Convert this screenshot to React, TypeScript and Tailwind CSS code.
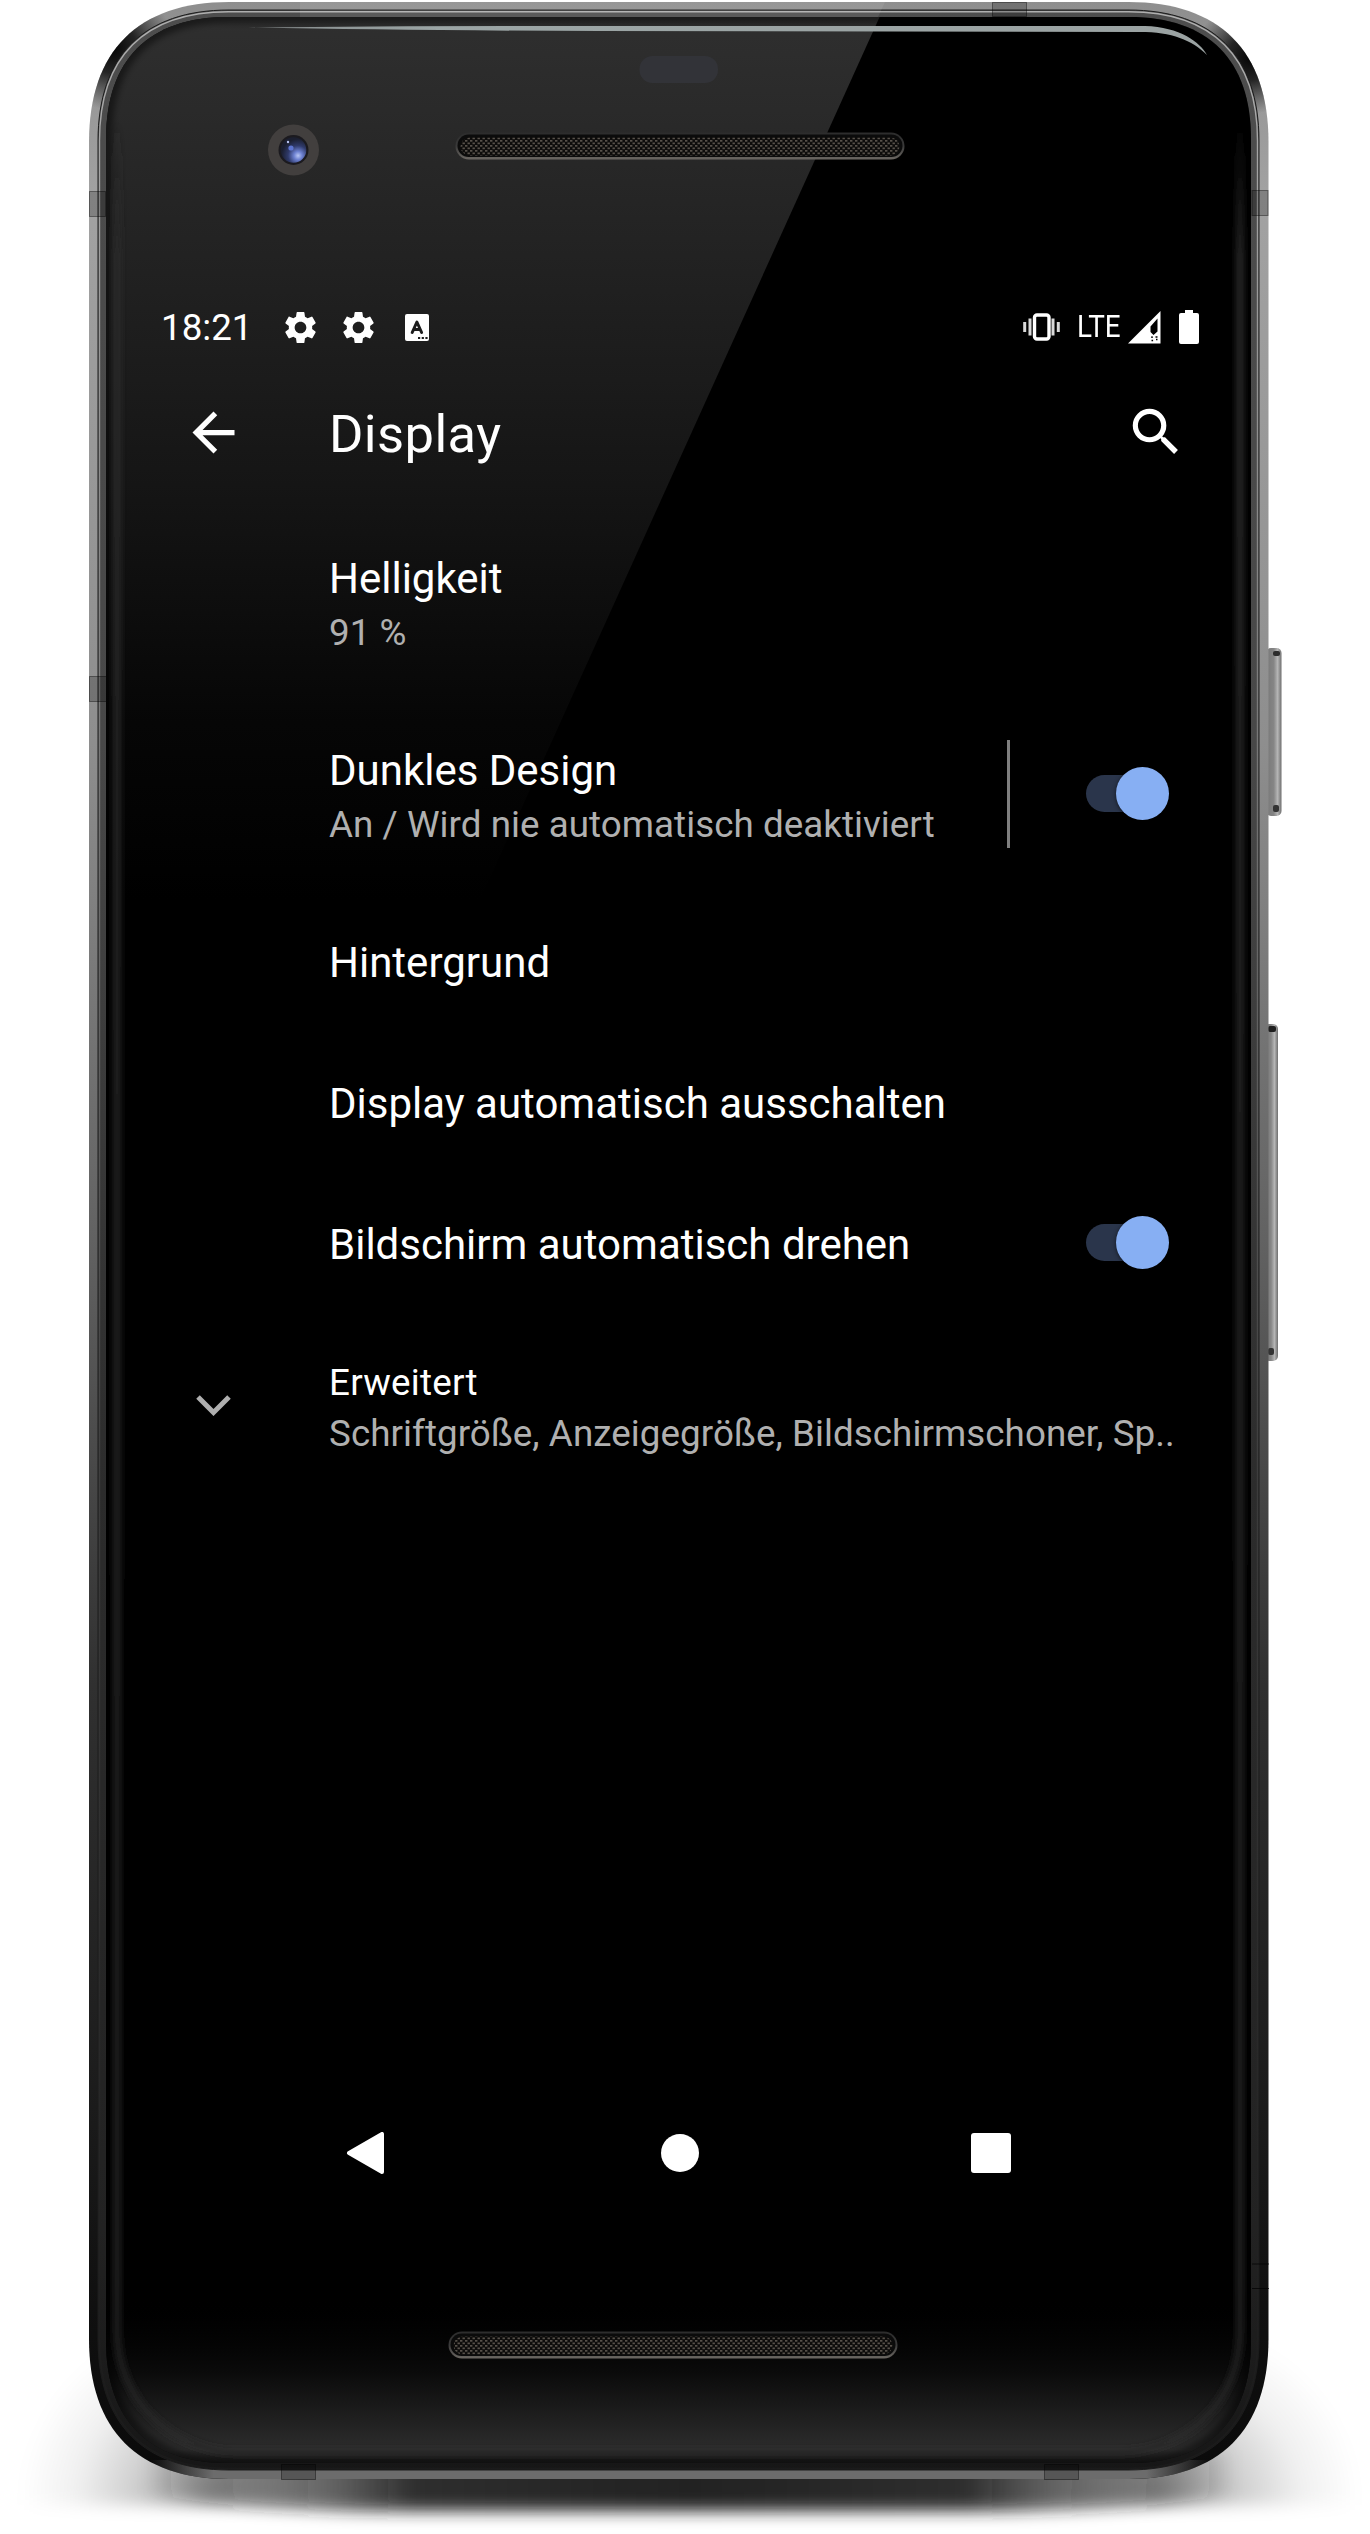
import React from "react";
import { MdArrowBack, MdSearch, MdSettings } from "react-icons/md";

function rounded(l: number, t: number, r: number, b: number, R: number) {
  const k = R * 0.35;
  return `M${l} ${t + R}C${l} ${t + k} ${l + k} ${t} ${l + R} ${t}H${r - R}C${r - k} ${t} ${r} ${t + k} ${r} ${t + R}V${b - R}C${r} ${b - k} ${r - k} ${b} ${r - R} ${b}H${l + R}C${l + k} ${b} ${l} ${b - k} ${l} ${b - R}Z`;
}

function Speaker({ x, y }: { x: number; y: number }) {
  return (
    <g>
      <rect x={x} y={y} width="449" height="27" rx="13.5" fill="url(#lip)" />
      <rect x={x + 2} y={y + 2} width="445" height="22.5" rx="11.2" fill="#0b0b0b" />
      <rect x={x + 5} y={y + 5} width="439" height="18" rx="9" fill="url(#mesh)" />
    </g>
  );
}

function Device() {
  const outer = rounded(89, 2, 1268.5, 2479, 140);
  const rim = rounded(98, 10, 1259, 2470, 131);
  const glass = rounded(106, 17, 1251, 2463, 122);
  return (
    <svg className="absolute inset-0" width="1370" height="2534" viewBox="0 0 1370 2534" aria-hidden="true">
      <defs>
        <linearGradient id="frame" x1="0" x2="0" y1="0" y2="2479" gradientUnits="userSpaceOnUse">
          <stop offset="0" stopColor="#8e8e8e" />
          <stop offset=".08" stopColor="#a2a2a2" />
          <stop offset=".3" stopColor="#8e8e8e" />
          <stop offset=".5" stopColor="#626262" />
          <stop offset=".68" stopColor="#303030" />
          <stop offset=".85" stopColor="#1b1b1b" />
          <stop offset=".93" stopColor="#101010" />
          <stop offset="1" stopColor="#0a0a0a" />
        </linearGradient>
        <linearGradient id="rim" x1="0" x2="0" y1="0" y2="2479" gradientUnits="userSpaceOnUse">
          <stop offset="0" stopColor="#4d4d4d" />
          <stop offset=".3" stopColor="#484848" />
          <stop offset=".6" stopColor="#2c2c2c" />
          <stop offset=".9" stopColor="#222" />
          <stop offset="1" stopColor="#161616" />
        </linearGradient>
        <linearGradient id="rimLine" x1="0" x2="0" y1="0" y2="2479" gradientUnits="userSpaceOnUse">
          <stop offset="0" stopColor="#b0b0b0" />
          <stop offset=".3" stopColor="#777" />
          <stop offset=".6" stopColor="#3c3c3c" />
          <stop offset="1" stopColor="#1a1a1a" />
        </linearGradient>
        <radialGradient id="cornerDark">
          <stop offset="0" stopColor="#050505" />
          <stop offset=".4" stopColor="#111" stopOpacity=".85" />
          <stop offset="1" stopColor="#222" stopOpacity="0" />
        </radialGradient>
        <linearGradient id="chin" x1="150" x2="1210" y1="0" y2="0" gradientUnits="userSpaceOnUse">
          <stop offset="0" stopColor="#6c6c6c" stopOpacity="0" />
          <stop offset=".06" stopColor="#6c6c6c" />
          <stop offset=".94" stopColor="#6c6c6c" />
          <stop offset="1" stopColor="#6c6c6c" stopOpacity="0" />
        </linearGradient>
        <linearGradient id="reflect" x1="0" x2="0" y1="17" y2="900" gradientUnits="userSpaceOnUse">
          <stop offset="0" stopColor="#2f2f2f" />
          <stop offset=".25" stopColor="#232323" />
          <stop offset=".53" stopColor="#151515" />
          <stop offset=".8" stopColor="#060606" />
          <stop offset="1" stopColor="#000" />
        </linearGradient>
        <linearGradient id="base" x1="0" x2="0" y1="2300" y2="2463" gradientUnits="userSpaceOnUse">
          <stop offset="0" stopColor="#000" stopOpacity="0" />
          <stop offset=".45" stopColor="#0b0b0b" />
          <stop offset=".92" stopColor="#2d2d2d" />
          <stop offset="1" stopColor="#1c1c1c" />
        </linearGradient>
        <linearGradient id="edgeGlow" x1="0" x2="0" y1="120" y2="2450" gradientUnits="userSpaceOnUse">
          <stop offset="0" stopColor="#2a2a2a" stopOpacity="0" />
          <stop offset=".06" stopColor="#2a2a2a" />
          <stop offset=".92" stopColor="#222" />
          <stop offset="1" stopColor="#2a2a2a" stopOpacity=".6" />
        </linearGradient>
        <linearGradient id="floor" x1="140" x2="1240" y1="0" y2="0" gradientUnits="userSpaceOnUse">
          <stop offset="0" stopColor="#222" stopOpacity="0" />
          <stop offset=".08" stopColor="#222" stopOpacity=".35" />
          <stop offset=".25" stopColor="#222" stopOpacity=".95" />
          <stop offset=".5" stopColor="#222" />
          <stop offset=".75" stopColor="#222" stopOpacity=".95" />
          <stop offset=".92" stopColor="#222" stopOpacity=".35" />
          <stop offset="1" stopColor="#222" stopOpacity="0" />
        </linearGradient>
        <radialGradient id="hazeSide">
          <stop offset="0" stopColor="#000" stopOpacity=".4" />
          <stop offset=".4" stopColor="#000" stopOpacity=".19" />
          <stop offset=".7" stopColor="#000" stopOpacity=".06" />
          <stop offset="1" stopColor="#000" stopOpacity="0" />
        </radialGradient>
        <linearGradient id="lip" x1="0" x2="0" y1="0" y2="1">
          <stop offset="0" stopColor="#2c2c2c" />
          <stop offset=".5" stopColor="#3a3a3a" />
          <stop offset="1" stopColor="#6b6762" />
        </linearGradient>
        <pattern id="mesh" width="5" height="5" patternUnits="userSpaceOnUse">
          <rect width="5" height="5" fill="#0d0c0b" />
          <rect x="0" y="0" width="2.4" height="1.7" fill="#57514a" />
          <rect x="2.5" y="2.5" width="2.4" height="1.7" fill="#57514a" />
        </pattern>
        <radialGradient id="lens" cx=".68" cy=".72" r=".65">
          <stop offset="0" stopColor="#b8c6f5" />
          <stop offset=".25" stopColor="#6c80d0" />
          <stop offset=".6" stopColor="#2f3a6a" />
          <stop offset="1" stopColor="#1b1f30" />
        </radialGradient>
        <linearGradient id="keyBody" x1="0" x2="1" y1="0" y2="0">
          <stop offset="0" stopColor="#777" />
          <stop offset=".5" stopColor="#858585" />
          <stop offset=".75" stopColor="#b5b5b5" />
          <stop offset="1" stopColor="#6e6e6e" />
        </linearGradient>
        <linearGradient id="gleam" x1="245" x2="1208" y1="0" y2="0" gradientUnits="userSpaceOnUse">
          <stop offset="0" stopColor="#84898a" />
          <stop offset=".2" stopColor="#9ba5a5" />
          <stop offset="1" stopColor="#9ba3a3" />
        </linearGradient>
        <filter id="blur2"><feGaussianBlur stdDeviation="3" /></filter>
        <filter id="blur8" x="-10%" width="120%" y="-100%" height="300%"><feGaussianBlur stdDeviation="8" /></filter>
        <clipPath id="outerClip"><path d={outer} /></clipPath>
        <clipPath id="glassClip"><path d={glass} /></clipPath>
        <clipPath id="hazeClip"><rect x="0" y="2300" width="1370" height="205" /></clipPath>
      </defs>

      {/* floor shadow */}
      <g filter="url(#blur8)">
        <g clipPath="url(#hazeClip)">
          <ellipse cx="210" cy="2500" rx="190" ry="180" fill="url(#hazeSide)" />
          <ellipse cx="1160" cy="2500" rx="200" ry="180" fill="url(#hazeSide)" />
        </g>
      </g>
      <path d="M150 2450H1230V2494Q1160 2509 1000 2511H370Q230 2509 150 2494Z" fill="url(#floor)" filter="url(#blur8)" />

      {/* side keys */}
      <rect x="1266" y="648" width="15.5" height="168" rx="5" fill="url(#keyBody)" />
      <rect x="1273" y="651" width="7" height="5" rx="2" fill="#2c2c2c" />
      <rect x="1273" y="805" width="6" height="7" rx="2" fill="#333" />
      <rect x="1264" y="1024" width="14" height="337" rx="5" fill="url(#keyBody)" />
      <rect x="1268" y="1026" width="8" height="6" rx="2" fill="#1f1f1f" />
      <rect x="1268" y="1348" width="6" height="7" rx="2" fill="#333" />

      {/* metal frame */}
      <path d={outer} fill="url(#frame)" />
      <g clipPath="url(#outerClip)">
        <circle cx="112" cy="48" r="62" fill="url(#cornerDark)" />
        <circle cx="1250" cy="58" r="56" fill="url(#cornerDark)" />
        <path d="M150 2460H1210V2479H150Z" fill="url(#chin)" />
      </g>
      <path d={rim} fill="url(#rim)" stroke="#1c1c1c" strokeWidth="1" />
      <path d={rounded(99.5, 11.8, 1257.5, 2468.5, 129)} fill="none" stroke="url(#rimLine)" strokeWidth="1.4" />
      <path d={glass} fill="#000" />

      {/* antenna bands */}
      <g fill="#000" fillOpacity=".2" stroke="#000" strokeOpacity=".4" strokeWidth="1">
        <rect x="89.5" y="191.5" width="16" height="25" />
        <rect x="1252" y="190.5" width="16" height="25" />
        <rect x="89.5" y="676.5" width="17" height="25" />
        <rect x="992.5" y="2.5" width="34" height="14" />
        <rect x="281.5" y="2464.5" width="34" height="15" />
        <rect x="1044.5" y="2464.5" width="34" height="15" />
      </g>
      <path d="M1252 2264H1269M1252 2288.5H1269" stroke="#000" strokeOpacity=".7" />

      {/* glass */}
      <g clipPath="url(#glassClip)">
        <path d="M100 15H880.5L480 900H100Z" fill="url(#reflect)" />
        <rect x="100" y="2300" width="1160" height="170" fill="url(#base)" />
        <path d={glass} fill="none" stroke="#000" strokeWidth="12" strokeOpacity=".45" filter="url(#blur2)" />
        <path d="M117 110V2330C117 2400 170 2450 235 2452H1120C1190 2450 1240 2400 1240 2330V110" fill="none" stroke="url(#edgeGlow)" strokeWidth="7" filter="url(#blur2)" />
      </g>
      <path d="M300 2H885L878 17H300Z" fill="#fff" fillOpacity=".08" />
      <path d="M248 27.5Q400 25.5 600 26H1145C1180 27 1200 42 1207 55C1192 40 1172 32 1140 32L600 31Q400 30.5 248 27.5Z" fill="url(#gleam)" />

      {/* sensor, camera, speakers */}
      <rect x="639.5" y="56" width="78.5" height="27" rx="13" fill="#323338" />
      <circle cx="293.5" cy="150" r="25.5" fill="#423f3e" />
      <circle cx="293.5" cy="150" r="15" fill="#1b1a1f" />
      <circle cx="293.5" cy="150" r="12.8" fill="url(#lens)" />
      <circle cx="291" cy="148" r="2.6" fill="#5d74cf" />
      <circle cx="288" cy="142" r="1.2" fill="#b9c4f2" />
      <Speaker x={455.5} y={132.5} />
      <Speaker x={448.5} y={2331.5} />
    </svg>
  );
}

function Vibration() {
  return (
    <svg width="37" height="28" viewBox="0 0 37 28" className="ml-auto" aria-hidden="true">
      <path d="M1.7 9v10M7 5.5v17M30 5.5v17M35.3 9v10" stroke="#fff" strokeWidth="3" opacity=".85" />
      <rect x="11.5" y="2" width="14.5" height="24" rx="2.5" fill="none" stroke="#fff" strokeWidth="3.4" />
    </svg>
  );
}

function Signal() {
  return (
    <svg width="33" height="33" viewBox="0 0 33 33" className="ml-[6px]" aria-hidden="true">
      <path fillRule="evenodd" d="M0 32.5L32.5 0V32.5ZM22.5 15.5V21L25.5 24L29.5 20.5V7.5Z" fill="#fff" />
      <path d="M23 26.2h2M27.5 26h2M23.5 29.5h1.6M28 28.5h1.5" stroke="#000" strokeWidth="1.3" />
    </svg>
  );
}

function StatusBar() {
  return (
    <div className="flex h-[46px] items-center text-white">
      <span className="relative top-[1px] w-[94px] text-[36.75px] leading-[46px]">18:21</span>
      <MdSettings size={39} className="ml-[26px]" />
      <MdSettings size={39} className="ml-[19px]" />
      <svg width="24" height="27" viewBox="0 0 24 27" className="ml-[27px]" aria-hidden="true">
        <rect width="24" height="27" rx="2" fill="#fff" />
        <path d="M7.2 18.5L11.9 8L16.6 18.5M8.8 15.4H15" fill="none" stroke="#1c1c1c" strokeWidth="3" strokeLinecap="round" strokeLinejoin="round" />
        <path d="M13 24h2.2M16.7 24h2.2M20.4 24h2.2" stroke="#1c1c1c" strokeWidth="2" />
      </svg>
      <Vibration />
      <span className="relative -top-[1px] ml-[17px] inline-block w-[45px] origin-left scale-x-[.87] text-[32px] leading-[46px]">LTE</span>
      <Signal />
      <svg width="20" height="34" viewBox="0 0 20 34" className="ml-[18px]" aria-hidden="true">
        <path d="M6 0H14V3H18Q20 3 20 5V32Q20 34 18 34H2Q0 34 0 32V5Q0 3 2 3H6Z" fill="#fff" />
      </svg>
    </div>
  );
}

function Toggle() {
  return (
    <div role="switch" aria-checked="true" className="mb-[5px] flex h-[37px] w-[83px] items-center justify-end rounded-full bg-[linear-gradient(90deg,#2a354b_70%,transparent_70%)]">
      <div className="size-[53px] shrink-0 rounded-full bg-[#87aff3] shadow-[0_1px_4px_rgba(0,0,0,.6)]" />
    </div>
  );
}

type RowProps = { title: string; summary?: string; toggle?: boolean; divider?: boolean };

function Row({ title, summary, toggle, divider }: RowProps) {
  return (
    <div className={summary ? "flex h-[192px] items-center" : "flex h-[141px] items-center"}>
      <div className="flex-1">
        <div className="text-[42px] leading-[56px] whitespace-nowrap text-white">{title}</div>
        {summary && <div className="mt-px text-[36.75px] leading-[50px] tracking-[0.05px] whitespace-nowrap text-[#b0b0b0]">{summary}</div>}
      </div>
      {divider && <div className="mr-[76px] mb-[5px] h-[108px] w-[3px] bg-[#7f7f7f]" />}
      {toggle && <Toggle />}
    </div>
  );
}

export default function App() {
  return (
    <div className="relative h-[2534px] w-[1370px] overflow-hidden bg-white font-[Roboto,sans-serif]">
      <Device />
      <main className="relative flex h-full flex-col pt-[304px] pr-[171px] pl-[161px]">
        <StatusBar />
        <header className="mt-[50px] flex h-[64px] items-center text-white">
          <MdArrowBack size={63} className="ml-[21px]" />
          <h1 className="ml-[84px] pt-[3px] text-[52.5px] leading-[64px] tracking-[0.4px]">Display</h1>
          <MdSearch size={62} className="ml-auto mr-[12px]" />
        </header>
        <section className="mt-[44px] pr-[30px] pl-[168px]">
          <Row title="Helligkeit" summary="91 %" />
          <Row title="Dunkles Design" summary="An / Wird nie automatisch deaktiviert" toggle divider />
          <Row title="Hintergrund" />
          <Row title="Display automatisch ausschalten" />
          <Row title="Bildschirm automatisch drehen" toggle />
        </section>
        <div className="flex h-[186px] items-center">
          <svg width="35" height="21" viewBox="0 0 35 21" className="mb-[5px] ml-[35px]" aria-hidden="true">
            <path d="M2 2L17.5 17.5L33 2" fill="none" stroke="#afafaf" strokeWidth="5" />
          </svg>
          <div className="ml-[98px] pt-px">
            <div className="text-[36.75px] leading-[50px] tracking-[0.25px] text-white">Erweitert</div>
            <div className="text-[36.75px] leading-[52px] tracking-[0.07px] whitespace-nowrap text-[#b0b0b0]">Schriftgröße, Anzeigegröße, Bildschirmschoner, Sp..</div>
          </div>
        </div>
        <nav className="mt-[631px] flex h-[42px] items-center pl-[185px] text-white">
          <svg width="38" height="42" viewBox="0 0 38 42" aria-hidden="true">
            <path d="M3 21L36 2V40Z" fill="#fff" stroke="#fff" strokeWidth="4" strokeLinejoin="round" />
          </svg>
          <div className="ml-[277px] size-[38px] rounded-full bg-white" />
          <div className="ml-[272px] size-[40px] rounded-[3px] bg-white" />
        </nav>
      </main>
    </div>
  );
}
